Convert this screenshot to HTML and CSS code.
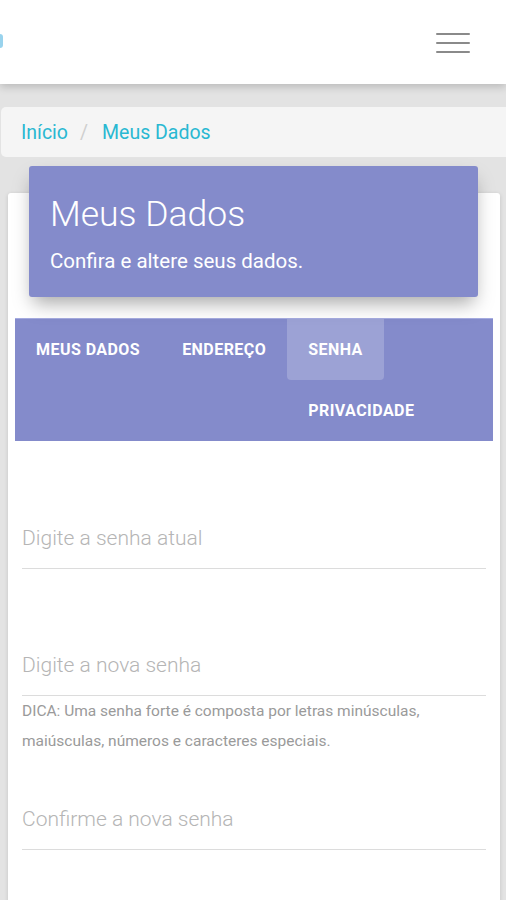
FILE: index.html
```html
<!DOCTYPE html>
<html lang="pt-BR">
<head>
<meta charset="utf-8">
<title>Meus Dados</title>
<link rel="stylesheet" href="styles.css">
</head>
<body>
<header class="topbar">
  <span class="logo-edge"></span>
  <button class="menu" aria-label="Menu">
    <span></span><span></span><span></span>
  </button>
</header>

<nav class="breadcrumb">
  <a href="#">Início</a>
  <span class="sep">/</span>
  <a href="#">Meus Dados</a>
</nav>

<section class="card">
  <div class="card-header">
    <h1>Meus Dados</h1>
    <p>Confira e altere seus dados.</p>
  </div>
  <div class="card-body">
    <ul class="tabs">
      <li class="tab">MEUS DADOS</li>
      <li class="tab">ENDEREÇO</li>
      <li class="tab active">SENHA</li>
      <li class="tab tab-wrap">PRIVACIDADE</li>
    </ul>
    <form class="form">
      <div class="field">
        <input type="password" placeholder="Digite a senha atual">
      </div>
      <div class="field">
        <input type="password" placeholder="Digite a nova senha">
        <p class="hint">DICA: Uma senha forte é composta por letras minúsculas, maiúsculas, números e caracteres especiais.</p>
      </div>
      <div class="field field-last">
        <input type="password" placeholder="Confirme a nova senha">
      </div>
    </form>
  </div>
</section>
</body>
</html>
```

FILE: styles.css
```css
* { box-sizing: border-box; }

html, body {
  margin: 0;
  padding: 0;
}

body {
  background: #e3e3e3;
  font-family: Roboto, "Liberation Sans", Arial, sans-serif;
  overflow: hidden;
  height: 900px;
}

.topbar {
  position: relative;
  height: 84px;
  background: #ffffff;
  box-shadow: 0 3px 8px rgba(0, 0, 0, 0.18);
  display: flex;
  align-items: center;
  justify-content: flex-end;
  padding-right: 36px;
  z-index: 2;
}

.logo-edge {
  position: absolute;
  left: -6px;
  top: 34px;
  width: 9px;
  height: 14px;
  border-radius: 3px;
  background: #7fc8e8;
  opacity: 0.8;
}

.menu {
  background: none;
  border: 0;
  padding: 0;
  width: 34px;
  height: 20px;
  display: flex;
  flex-direction: column;
  justify-content: space-between;
  margin-top: 1px;
}

.menu span {
  display: block;
  height: 2px;
  background: #8a8a8a;
  border-radius: 1px;
}

.breadcrumb {
  margin: 23px -6px 0 1px;
  height: 50px;
  background: #f5f5f5;
  border-radius: 5px;
  display: flex;
  align-items: center;
  padding-left: 20px;
  font-size: 19.5px;
}

.breadcrumb a {
  color: #29b8d2;
  text-decoration: none;
}

.breadcrumb .sep {
  color: #cfcfcf;
  margin: 0 14px 0 12px;
}

.card {
  margin: 36px 6px 0 8px;
  background: #ffffff;
  border-radius: 3px;
  min-height: 720px;
  box-shadow: 0 1px 4px rgba(0, 0, 0, 0.14);
}

.card-header {
  position: relative;
  top: -27px;
  margin: 0 22px -27px 21px;
  height: 131px;
  background: #848bcb;
  border-radius: 3px;
  padding: 27px 21px 0;
  color: #ffffff;
  box-shadow: 0 10px 18px -4px rgba(0, 0, 0, 0.35);
}

.card-header h1 {
  margin: 0;
  font-size: 35.5px;
  font-weight: 300;
  line-height: 42px;
}

.card-header p {
  margin: 14px 0 0;
  font-size: 20.5px;
  font-weight: 400;
  line-height: 24px;
}

.card-body {
  padding: 21px 7px 0;
}

.tabs {
  list-style: none;
  margin: 0;
  padding: 0;
  background: #848bcb;
  border-top: 1px solid #a5abe0;
  display: grid;
  grid-template-columns: auto auto auto 1fr;
  grid-auto-rows: 61px;
}

.tab {
  display: flex;
  align-items: center;
  padding: 0 21px;
  color: #ffffff;
  font-size: 16px;
  font-weight: 700;
  letter-spacing: 0.45px;
  border-radius: 0 0 4px 4px;
  white-space: nowrap;
}

.tab.active {
  background: rgba(255, 255, 255, 0.2);
}

.tab-wrap {
  grid-column: 3 / span 2;
}

.form {
  padding: 72px 7px 0;
}

.field {
  margin-top: 71px;
}

.field:first-child {
  margin-top: 0;
}

.field input {
  display: block;
  width: 100%;
  height: 56px;
  padding: 0 0 6px 0;
  border: 0;
  border-bottom: 1px solid #dcdcdc;
  font-family: inherit;
  font-size: 21px;
  font-weight: 300;
  color: #555;
  background: transparent;
  outline: none;
}

.field input::placeholder {
  color: #b5b5b5;
}

.hint {
  margin: 0;
  font-size: 15.5px;
  line-height: 30px;
  color: #9a9a9a;
}

.field-last {
  margin-top: 38px;
}
```
